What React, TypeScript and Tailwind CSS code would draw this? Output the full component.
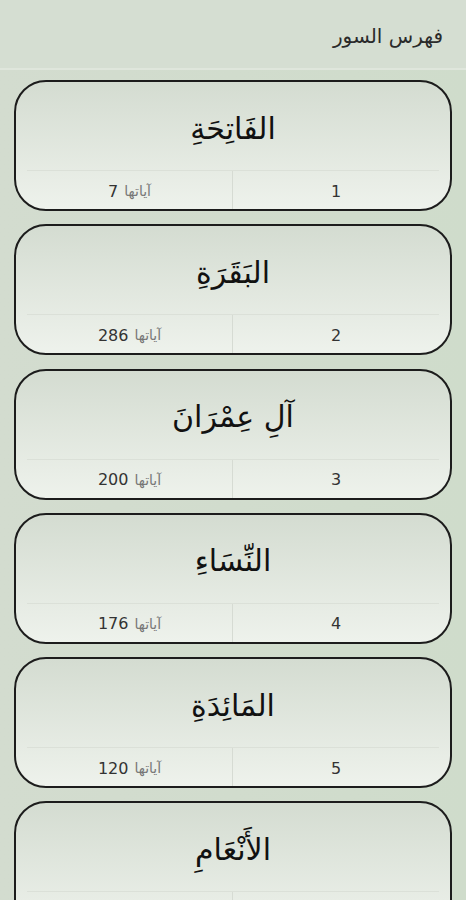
const surahs = [
  { num: 1, name: "الفَاتِحَةِ", ayat: 7 },
  { num: 2, name: "البَقَرَةِ", ayat: 286 },
  { num: 3, name: "آلِ عِمْرَانَ", ayat: 200 },
  { num: 4, name: "النِّسَاءِ", ayat: 176 },
  { num: 5, name: "المَائِدَةِ", ayat: 120 },
  { num: 6, name: "الأَنْعَامِ", ayat: 165 },
];

export default function App() {
  return (
    <div
      dir="rtl"
      className="w-[466px] h-[900px] overflow-hidden bg-gradient-to-r from-[#d3dccf] to-[#cfdccb] font-['DejaVu_Sans',sans-serif]"
    >
      <div className="h-[70px] flex items-center px-[23px] pt-[4px] bg-[#d5ded2] border-b-2 border-[#dfe6dc]">
        <span className="text-[20px] text-[#2a2a2a]">فهرس السور</span>
      </div>

      <div className="flex flex-col gap-[13.3px] px-[14px] pt-[10px]">
        {surahs.map((s) => (
          <div
            key={s.num}
            className="h-[131px] shrink-0 rounded-[32px] border-2 border-[#1c1c1c] bg-gradient-to-b from-[#d4dcd1] to-[#eef2ec] flex flex-col overflow-hidden"
          >
            <div className="h-[88px] flex items-center justify-center pt-[4px]">
              <span className="text-[30px] text-[#111]">{s.name}</span>
            </div>
            <div className="mx-[11px] flex-1 grid grid-cols-2 border-t border-[#dbe0d8]">
              <div className="flex items-center justify-center text-[16px] text-[#333] pt-[3px]">
                {s.num}
              </div>
              <div className="flex items-center justify-center gap-[6px] border-r border-[#d6dbd3] pt-[3px]">
                <span className="text-[14px] text-[#777]">آياتها</span>
                <span className="text-[16px] text-[#333]">{s.ayat}</span>
              </div>
            </div>
          </div>
        ))}
      </div>
    </div>
  );
}
